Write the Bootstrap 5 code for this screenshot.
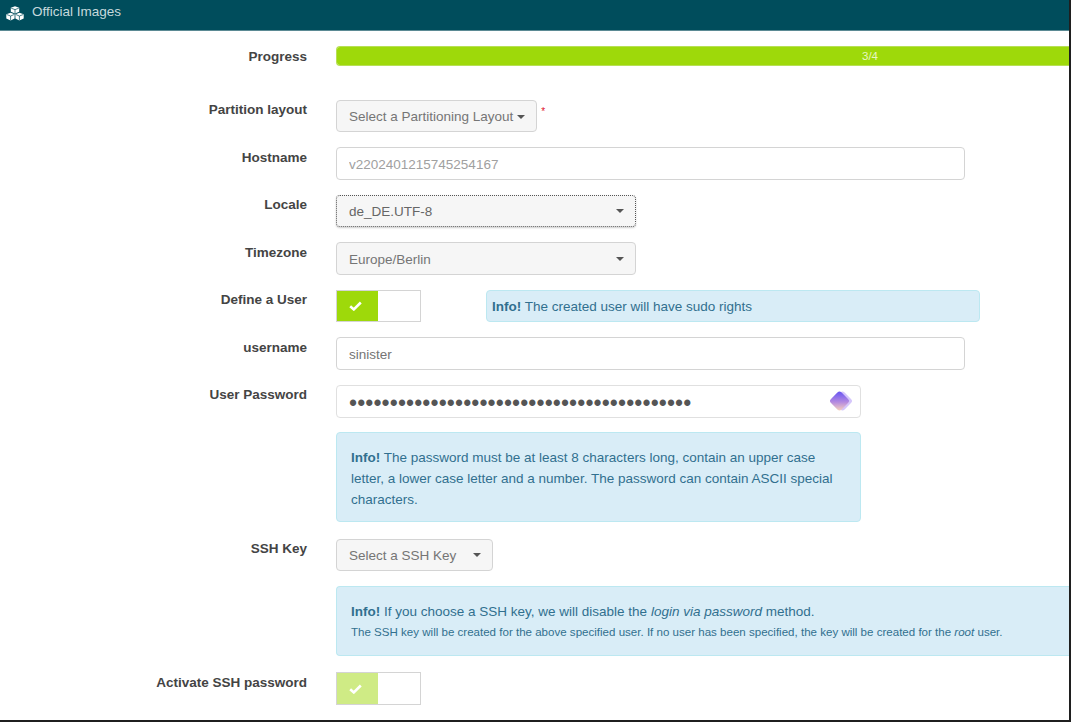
<!DOCTYPE html>
<html lang="en">
<head>
<meta charset="utf-8">
<title>Official Images</title>
<link href="https://cdn.jsdelivr.net/npm/bootstrap@5.3.0/dist/css/bootstrap.min.css" rel="stylesheet">
<style>
html,body{height:100%;overflow:hidden}
body{background:#1f1f1f;font-family:"Liberation Sans",Arial,sans-serif;font-size:13.5px;color:#444}
.shell{width:1069px;height:720px;background:#fff;overflow:hidden}
.topbar{height:31px;background:#004d5c;border-bottom:1px solid #5b8a94;color:#c6d9dd;font-size:13.5px;padding-left:6px;padding-bottom:5px;gap:8px}
.topbar svg{width:18px;height:15px;display:block;margin-top:1px}
.formwrap{padding-top:14.98px}
.frow{display:flex;margin-bottom:15px;min-height:32.5px}
.flabel{width:307px;flex:none;text-align:right;font-weight:700;color:#444;line-height:18px;padding-top:1.5px}
.fctl{margin-left:29px;flex:1;min-width:0;display:flex;align-items:flex-start}
.prow{min-height:20px;margin-bottom:34px}
.prow .flabel{padding-top:2px}
.pbar{height:20px;width:100%;border-radius:4px 0 0 4px;background:#9ed90a;border:1px solid #b7df55;border-right:0;font-size:11.5px}
.pbar .progress-bar{background:#9ed90a;color:#e8f6c4;width:1066px;flex:none;overflow:visible;padding-top:2px}
.fbtn,.fsel{height:32.5px;background:#f6f6f6;border:1px solid #d4d4d4;border-radius:4px;color:#757575;font-size:13.5px;padding:2px 11px 0 12px;display:flex;align-items:center;white-space:nowrap}
.fbtn:hover{background:#f6f6f6;border-color:#d4d4d4;color:#757575}
.caretx{display:inline-block;width:0;height:0;border-top:4px solid #555;border-left:4px solid transparent;border-right:4px solid transparent}
.fsel .caretx,.ssh .caretx{margin-top:-2px}
.fbtn .caretx{margin-left:4px}
.ssh .caretx{margin-left:17px}
.fsel{width:300px;justify-content:space-between}
.focused{border:1px dotted #555;box-shadow:0 1px 2px rgba(0,0,0,.2);color:#666}
.req{color:#e0102a;font-size:10px;margin-left:4px;margin-top:6px;line-height:12px}
.finput{height:32.5px;width:629px;border:1px solid #d4d4d4;border-radius:4px;padding:1px 12px 0;font-size:13.5px;color:#757575;box-shadow:none}
.finput::placeholder{color:#a0a0a0;opacity:1}
.pwd{width:525px;position:relative}
.pwd .finput{width:100%;height:33px;font-size:23px;letter-spacing:.1px;color:#555;border-color:#e0e0e0;padding-top:3px}
.pwd svg{position:absolute;right:8px;top:4px;width:24px;height:24px}
.tog{width:85px;height:32.5px;border:1px solid #d4d4d4;display:flex;background:#fff;flex:none}
.tog-on{width:41px;background:#9ed90a;display:flex;align-items:center;padding-left:12px}
.tog.dim .tog-on{background:#cfeb85}
.tog svg{width:13px;height:10px;display:block}
.infox{background:#d9edf7;border:1px solid #bce8f1;border-radius:4px;color:#31708f;margin:0;--bs-alert-padding-x:0;--bs-alert-padding-y:0}
.infox strong{color:#31708f}
.short{width:494px;height:32px;margin-left:65px;padding:1px 5px 0;line-height:30px}
.pwinfo{width:525px;height:90px;padding:14px 14px 0;line-height:21px}
.sshinfo{height:70px;padding:15px 14px 0;border-right:0;border-radius:4px 0 0 4px}
.sshinfo .lead1{line-height:20px}
.sshinfo .sm1{font-size:11.55px;line-height:16px;margin-top:2px}
.spacer{flex:none;width:336px}
.gappw{margin-bottom:14px}
.gapinfo{margin-bottom:17px}
.gapssh{margin-bottom:16px}
</style>
</head>
<body>
<div class="shell">
  <div class="topbar d-flex align-items-center">
    <svg viewBox="0 0 18 15" aria-hidden="true"><g fill="#fff"><path d="M9 .3l4.200 1.500v3.900L9 7.400 4.800 5.700V1.800z"/><path d="M4.600 6.700l4 1.500v4.400l-4 2-4.300-2V8.200z"/><path d="M13.400 6.700l4.300 1.500v4.400l-4.300 2-4-2V8.200z"/></g><g fill="none" stroke="#004d5c" stroke-width=".7"><path d="M5.200 2.200L9 3.600l3.800-1.400M9 3.600v3.600M.7 8.500l3.900 1.500 3.600-1.500M4.600 10v4.400M9.800 8.500l3.600 1.500 3.900-1.500M13.400 10v4.400"/></g></svg>
    <span>Official Images</span>
  </div>
  <div class="formwrap">
    <div class="frow prow">
      <div class="flabel">Progress</div>
      <div class="fctl"><div class="progress pbar"><div class="progress-bar" role="progressbar">3/4</div></div></div>
    </div>
    <div class="frow">
      <div class="flabel">Partition layout</div>
      <div class="fctl"><button type="button" class="btn fbtn">Select a Partitioning Layout<span class="caretx"></span></button><span class="req">*</span></div>
    </div>
    <div class="frow">
      <div class="flabel">Hostname</div>
      <div class="fctl"><input class="form-control finput" placeholder="v2202401215745254167"></div>
    </div>
    <div class="frow">
      <div class="flabel">Locale</div>
      <div class="fctl"><div class="fsel focused"><span>de_DE.UTF-8</span><span class="caretx"></span></div></div>
    </div>
    <div class="frow">
      <div class="flabel">Timezone</div>
      <div class="fctl"><div class="fsel"><span>Europe/Berlin</span><span class="caretx"></span></div></div>
    </div>
    <div class="frow">
      <div class="flabel">Define a User</div>
      <div class="fctl">
        <div class="tog"><div class="tog-on"><svg viewBox="0 0 13 10"><path d="M1.200 5.200l3.600 3.200L11.800 1.500" fill="none" stroke="#fff" stroke-width="2.600"/></svg></div></div>
        <div class="alert infox short"><strong>Info!</strong> The created user will have sudo rights</div>
      </div>
    </div>
    <div class="frow">
      <div class="flabel">username</div>
      <div class="fctl"><input class="form-control finput" value="sinister"></div>
    </div>
    <div class="frow gappw">
      <div class="flabel">User Password</div>
      <div class="fctl"><div class="pwd"><input type="password" class="form-control finput" value="aaaaaaaaaaaaaaaaaaaaaaaaaaaaaaaaaaaaaaaaaa">
        <svg viewBox="0 0 24 24" aria-hidden="true"><defs><linearGradient id="gr" x1="0" y1="0" x2="1" y2="1"><stop offset="0" stop-color="#5f4ff5"/><stop offset=".55" stop-color="#b48ae0"/><stop offset="1" stop-color="#ffd9b8"/></linearGradient></defs><rect x="6" y="4.500" width="15" height="15" rx="3" transform="rotate(45 13.500 12)" fill="#d5c6fb"/><rect x="3" y="4.500" width="15" height="15" rx="3" transform="rotate(45 10.500 12)" fill="url(#gr)"/></svg>
      </div></div>
    </div>
    <div class="d-flex gapinfo">
      <div class="spacer"></div>
      <div class="alert infox pwinfo"><strong>Info!</strong> The password must be at least 8 characters long, contain an upper case letter, a lower case letter and a number. The password can contain ASCII special characters.</div>
    </div>
    <div class="frow">
      <div class="flabel">SSH Key</div>
      <div class="fctl"><button type="button" class="btn fbtn ssh">Select a SSH Key<span class="caretx"></span></button></div>
    </div>
    <div class="d-flex gapssh">
      <div class="spacer"></div>
      <div class="alert infox sshinfo flex-grow-1">
        <div class="lead1"><strong>Info!</strong> If you choose a SSH key, we will disable the <em>login via password</em> method.</div>
        <div class="sm1">The SSH key will be created for the above specified user. If no user has been specified, the key will be created for the <em>root</em> user.</div>
      </div>
    </div>
    <div class="frow">
      <div class="flabel">Activate SSH password</div>
      <div class="fctl"><div class="tog dim"><div class="tog-on"><svg viewBox="0 0 13 10"><path d="M1.200 5.200l3.600 3.200L11.800 1.500" fill="none" stroke="#fff" stroke-width="2.600"/></svg></div></div></div>
    </div>
  </div>
</div>
<script src="https://cdn.jsdelivr.net/npm/bootstrap@5.3.0/dist/js/bootstrap.bundle.min.js"></script>
</body>
</html>
